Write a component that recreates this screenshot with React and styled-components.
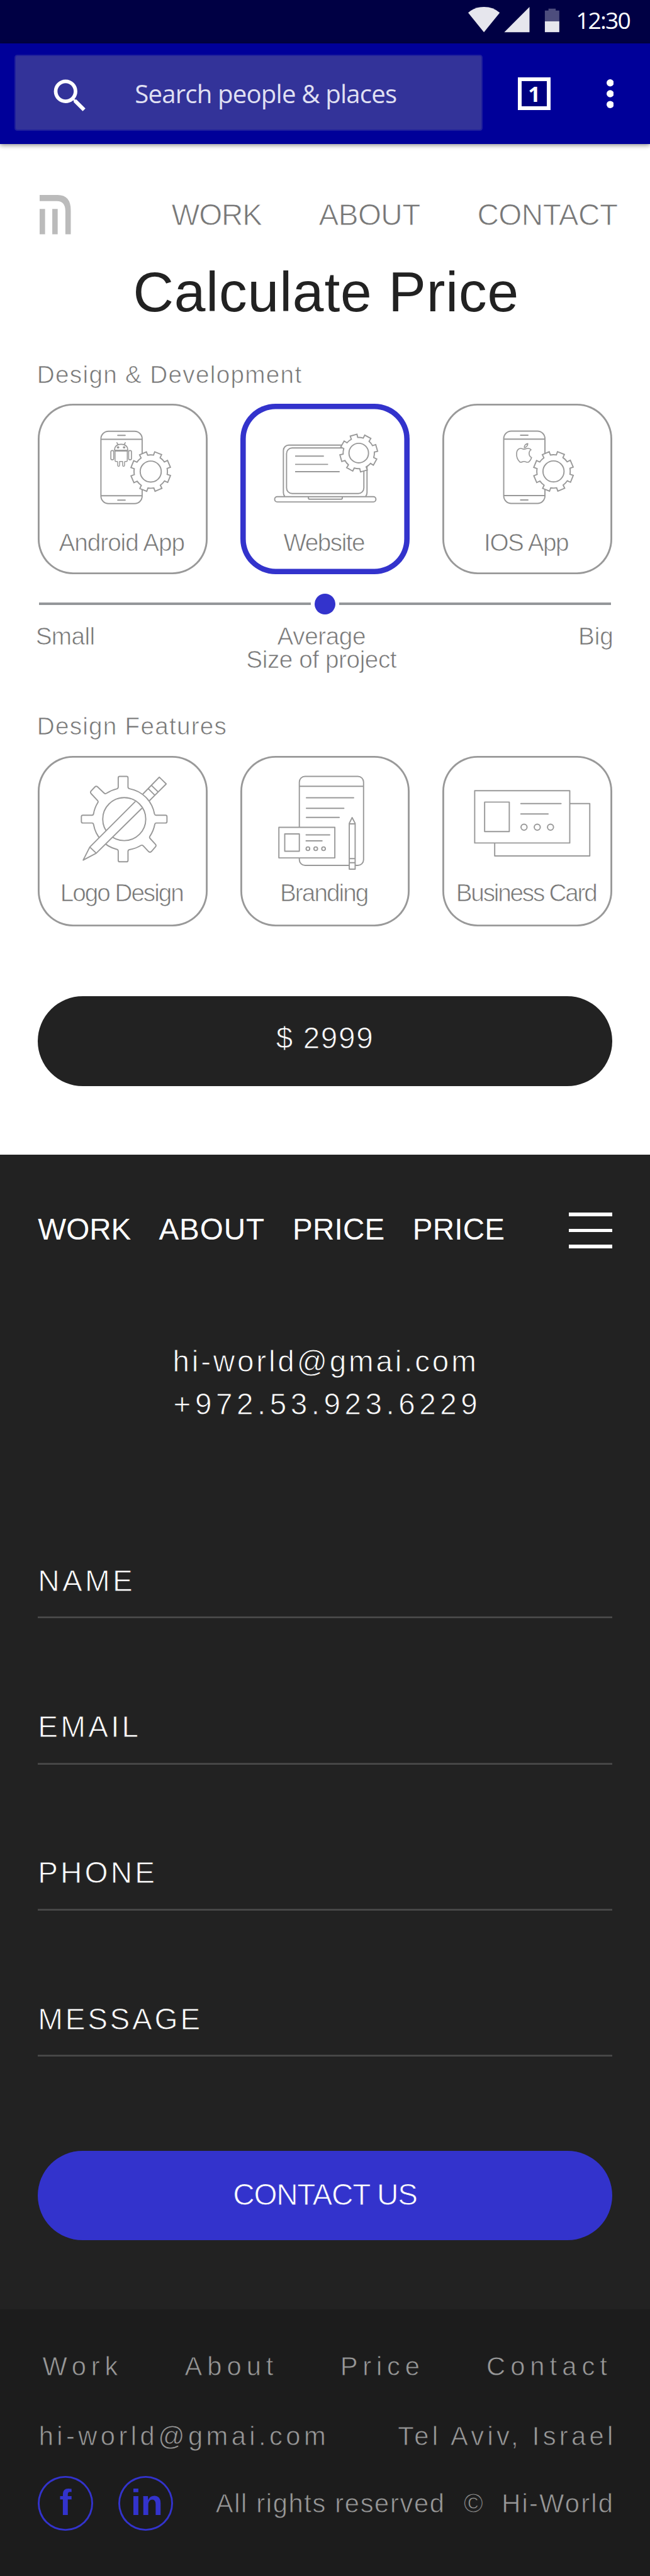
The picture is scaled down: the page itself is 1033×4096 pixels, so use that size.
import React from "react";
import styled, { createGlobalStyle, css } from "styled-components";

const u = (n) => `${+(n * 0.7172).toFixed(3)}px`;

const sans = `"Liberation Sans", Arial, Helvetica, sans-serif`;
const system = `"Open Sans", "Noto Sans", sans-serif`;

const color = {
  ink: "#222222",
  footer: "#1c1c1c",
  grey: "#777777",
  line: "#999999",
  accent: "#3333cc",
  bar: "#000099",
  status: "#000044",
};

const GlobalStyle = createGlobalStyle`
  *, *::before, *::after { box-sizing: border-box; }
  body { margin: 0; background: #fff; font-family: ${sans}; }
`;

/* The glyphs are set slightly larger than the line box to reach full cap height. */
const type = css`
  font-size: ${(p) => u(p.$size * 1.038)};
  letter-spacing: ${(p) => u(p.$track || 0)};
  line-height: ${(p) => u(p.$size)};
  white-space: pre;
`;

const systemType = css`
  font-family: ${system};
  font-size: ${(p) => u(p.$size)};
  letter-spacing: ${(p) => u(p.$track || 0)};
  line-height: 1;
  white-space: pre;
`;

/* Light cut: the outline takes the background colour and slims the stems. */
const light = (bg) => css`
  -webkit-text-stroke: 0.019em ${bg};
`;

const Page = styled.div`
  width: 100%;
  height: 4096px;
  overflow: hidden;
  display: flex;
  flex-direction: column;
`;

/* ---------- status + app bar ---------- */
const StatusBar = styled.div`
  flex: none;
  height: ${u(96)};
  background: ${color.status};
  display: flex;
  align-items: flex-start;
  padding: ${u(16)} 0 0 ${u(1038)};
`;
const StatusIcons = styled.svg`
  flex: none;
  width: ${u(202)};
  height: ${u(56)};
`;
const Clock = styled.span`
  ${systemType}
  color: #fff;
  margin: ${u(2)} 0 0 ${u(36)};
`;
const AppBar = styled.div`
  flex: none;
  height: ${u(224)};
  background: ${color.bar};
  display: flex;
  align-items: flex-start;
  padding: ${u(25)} 0 0 ${u(32)};
  box-shadow: 0 ${u(3)} ${u(10)} rgba(0, 0, 0, 0.45);
  z-index: 1;
`;
const SearchBox = styled.div`
  width: ${u(1037)};
  height: ${u(169)};
  border: ${u(3)} solid #1f1f9b;
  border-radius: ${u(6)};
  background: #333399;
  display: flex;
  align-items: center;
  padding-left: ${u(73)};
`;
const SearchIcon = styled.svg`
  width: ${u(96)};
  height: ${u(96)};
  margin-top: ${u(13)};
  fill: #fff;
`;
const SearchText = styled.span`
  ${systemType}
  color: #e0e0f2;
  margin: ${u(4)} 0 0 ${u(95)};
`;
const TabCount = styled.div`
  width: ${u(72)};
  height: ${u(72)};
  margin: ${u(51)} 0 0 ${u(79)};
  border: ${u(8.5)} solid #fff;
  background: #000080;
  color: #fff;
  font: bold ${u(48)} / 1 ${system};
  display: flex;
  align-items: center;
  justify-content: center;
`;
const MoreIcon = styled.svg`
  width: ${u(16)};
  height: ${u(64)};
  margin: ${u(55)} 0 0 ${u(124)};
  fill: #fff;
`;

/* ---------- calculator ---------- */
const Main = styled.main`
  flex: none;
  height: ${u(2240)};
  background: #fff;
  color: ${color.grey};
  padding: ${u(112)} ${u(84)} 0;
`;
const Header = styled.header`
  display: flex;
  height: ${u(88)};
  padding-left: ${u(4)};
`;
const Logo = styled.svg`
  width: ${u(69)};
  height: ${u(88)};
  flex: none;
`;
const TopNav = styled.nav`
  display: flex;
  gap: ${u(126.5)};
  margin: ${u(13)} 0 0 ${u(223)};
`;
const NavLink = styled.span`
  ${type}
  ${light("#fff")}
`;
const Title = styled.h1`
  ${type}
  margin: ${u(66.4)} 0 0;
  padding-left: ${u(5)};
  font-weight: 400;
  text-align: center;
  color: ${color.ink};
`;
const SectionLabel = styled.h2`
  ${type}
  ${light("#fff")}
  font-weight: 400;
  margin: ${(p) => u(p.$top)} 0 ${u(39.2)} ${u(-2)};
`;
const Cards = styled.div`
  display: grid;
  grid-template-columns: repeat(3, ${u(376)});
  justify-content: space-between;
`;
const Card = styled.div`
  height: ${u(378)};
  border-radius: ${u(78)};
  box-shadow: inset 0 0 0
    ${(p) => (p.$selected ? `${u(12)} ${color.accent}` : `${u(4)} ${color.line}`)};
  display: flex;
  flex-direction: column;
  align-items: center;
`;
const CardArt = styled.svg`
  width: ${u(376)};
  height: ${u(270)};
  flex: none;
  fill: none;
  stroke: ${color.line};
  stroke-width: 8;
  stroke-linejoin: round;
`;
const CardLabel = styled.span`
  ${type}
  ${light("#fff")}
  margin: ${(p) => u(p.$top)} ${u(5)} 0 0;
`;
const Slider = styled.div`
  display: flex;
  align-items: center;
  gap: ${u(8)};
  height: ${u(46)};
  margin: ${u(42.5)} ${u(2)} 0;
`;
const Track = styled.div`
  flex: 1;
  height: ${u(4.6)};
  background: #94979a;
`;
const Knob = styled.div`
  width: ${u(46)};
  height: ${u(46)};
  border-radius: 50%;
  background: ${color.accent};
`;
const Scale = styled.div`
  display: grid;
  grid-template-columns: 1fr auto 1fr;
  margin: ${u(23)} ${u(-3)} 0 ${u(-5)};
`;
const ScaleLabel = styled.span`
  ${type}
  ${light("#fff")}
  text-align: ${(p) => p.$align};
  margin-right: ${(p) => u(p.$nudge || 0)};
`;
const Pill = styled.div`
  ${type}
  ${(p) => light(p.$bg)}
  height: ${u(199)};
  margin-top: ${(p) => u(p.$top)};
  padding-bottom: ${(p) => u(p.$lift)};
  border-radius: ${u(100)};
  background: ${(p) => p.$bg};
  color: #fff;
  display: flex;
  align-items: center;
  justify-content: center;
`;

/* ---------- contact ---------- */
const Contact = styled.section`
  flex: none;
  height: ${u(2560)};
  background: ${color.ink};
  color: #fff;
  padding: ${u(128)} ${u(84)} 0;
`;
const MenuRow = styled.div`
  display: flex;
  justify-content: space-between;
  height: ${u(80)};
`;
const MenuLinks = styled.nav`
  display: flex;
  gap: ${u(61.5)};
  padding-top: ${u(5.8)};
`;
const MenuLink = styled.span`
  ${type}
`;
const Burger = styled.div`
  width: ${u(96)};
  display: flex;
  flex-direction: column;
  justify-content: space-between;
`;
const BurgerBar = styled.div`
  height: ${u(8)};
  background: #fff;
`;
const Reach = styled.address`
  font-style: normal;
  display: flex;
  flex-direction: column;
  align-items: center;
  gap: ${u(31.4)};
  margin-top: ${u(218.4)};
`;
const ReachLine = styled.span`
  ${type}
  ${light(color.ink)}
  padding-left: ${(p) => u(p.$indent)};
`;
const Form = styled.form`
  display: flex;
  flex-direction: column;
  gap: ${u(208.8)};
  margin-top: ${u(327)};
`;
const Field = styled.label`
  ${type}
  ${light(color.ink)}
  height: ${u(115.2)};
  box-shadow: inset 0 ${u(-4)} 0 #4a4a4a;
`;

/* ---------- footer ---------- */
const Footer = styled.footer`
  flex: none;
  height: ${u(592)};
  background: ${color.footer};
  color: ${color.line};
  padding: ${u(99.6)} ${u(74.5)} 0 ${u(84)};
`;
const FooterText = styled.span`
  ${type}
  ${light(color.footer)}
`;
const FooterLinks = styled.nav`
  display: flex;
  gap: ${u(137)};
  padding-left: ${u(10)};
`;
const FooterRow = styled.div`
  display: flex;
  justify-content: space-between;
  margin-top: ${u(97.5)};
  padding-left: ${u(2)};
`;
const LegalRow = styled.div`
  display: flex;
  align-items: center;
  height: ${u(122)};
  margin-top: ${u(60)};
`;
const Social = styled.a`
  flex: none;
  width: ${u(122)};
  height: ${u(122)};
  margin-right: ${u(56)};
  padding: 0 0 ${u(3)} ${(p) => u(p.$shift || 0)};
  box-shadow: inset 0 0 0 ${u(4)} ${color.accent};
  border-radius: 50%;
  color: ${color.accent};
  font: bold ${u(80)} / 1 ${sans};
  display: flex;
  align-items: center;
  justify-content: center;
`;
const Legal = styled.div`
  display: flex;
  gap: ${u(41)};
  margin: ${u(3)} 0 0 ${u(38)};
`;

/* ---------- illustrations ---------- */
const gearPath = (cx, cy, tip, base, rotation) => {
  const at = (r, deg) => {
    const a = (deg * Math.PI) / 180;
    return `${(cx + r * Math.cos(a)).toFixed(1)} ${(cy + r * Math.sin(a)).toFixed(1)}`;
  };
  let d = "";
  for (let i = 0; i < 8; i++) {
    const a = rotation + i * 45;
    d += i ? `A${base} ${base} 0 0 1 ${at(base, a - 12.3)}` : `M${at(base, a - 12.3)}`;
    d += `L${at(tip, a - 10.6)}L${at(tip, a + 10.6)}L${at(base, a + 12.3)}`;
  }
  return `${d}A${base} ${base} 0 0 1 ${at(base, rotation - 12.3)}Z`;
};

const Gear = ({ cx, cy, tip, base, hole, rotation }) => (
  <g fill="#fff" strokeLinejoin="miter">
    <path d={gearPath(cx, cy, tip, base, rotation)} />
    <circle cx={cx} cy={cy} r={hole} />
  </g>
);

const Phone = () => (
  <>
    <rect x="493" y="227" width="274" height="481" rx="50" />
    <path d="M493 280H767M493 656H767" />
    <path d="M605 254H654M605 685H654" strokeLinecap="round" />
    <Gear cx={824} cy={495} tip={134} base={111} hole={70} rotation={22} />
  </>
);

const AndroidArt = () => (
  <CardArt viewBox="73 44 1128 810">
    <Phone />
    <g strokeWidth="7" strokeLinecap="round">
      <path d="M584 352V348C586 324 604 313 627 313S669 324 671 348V352" />
      <path d="M599 303L606 315M655 303L648 315" />
      <path d="M582 356H673" strokeWidth="12" strokeLinecap="butt" />
      <circle cx="607" cy="334" r="8" fill="#999" stroke="none" />
      <circle cx="647" cy="334" r="8" fill="#999" stroke="none" />
      <rect x="559" y="355" width="19" height="62" rx="9" />
      <rect x="677" y="355" width="19" height="62" rx="9" />
      <path
        strokeWidth="6"
        d="M587 361V420Q587 428 595 428H601Q604 428 604 432V453Q604 460 610.500 460T617 453V428H637V453Q637 460 643.500 460T650 453V432Q650 428 654 428H660Q668 428 668 420V361"
      />
    </g>
  </CardArt>
);

const IosArt = () => (
  <CardArt viewBox="61 44 1128 810">
    <g transform="translate(-24 -1)">
      <Phone />
    </g>
    <g strokeWidth="7">
      <path d="M606 335C604 322 615 311 629 309C629 322 620 334 606 335Z" />
      <path d="M603 346C612 346 620 340 632 341C641 342 647 345 651 350C632 362 634 392 654 402C650 415 642 427 634 432C622 437 615 427 604 428C594 427 588 436 577 432C561 418 553 395 555 372C556 353 568 340 583 341C592 342 597 346 603 346Z" />
    </g>
  </CardArt>
);

const WebsiteArt = () => (
  <CardArt viewBox="66 44 1128 810">
    <path d="M361 660Q352 650 352 635V355A36 36 0 0 1 388 319H872A36 36 0 0 1 908 355V635Q908 650 899 660" />
    <rect x="373" y="338" width="514" height="303" rx="37" />
    <path d="M430 392H621M430 447H649M430 496H726" />
    <rect x="294" y="662" width="673" height="35" rx="17" />
    <path d="M518 662V669Q518 679 528 679H734Q744 679 744 669V662" />
    <Gear cx={853} cy={372} tip={126} base={104} hole={65} rotation={-16} />
  </CardArt>
);

const LogoArt = () => (
  <CardArt viewBox="73 44 1128 810">
    <path d="M608 250V190Q608 180 618 180H663Q673 180 673 190V250Q673 260 683 262A206 206 0 0 1 849 430Q852 438 859 438H922Q932 438 932 448V480Q932 490 922 490H861Q853 490 851 499A206 206 0 0 1 818 579Q814 587 820 593L856 632Q862 640 856 648L828 680Q819 688 810 680L774 642Q767 635 759 639A206 206 0 0 1 683 667Q673 669 673 679V738Q673 748 663 748H618Q608 748 608 738V678Q608 668 598 665A206 206 0 0 1 444 500Q442 490 434 490H373Q363 490 363 480V448Q363 438 373 438H434Q442 438 444 429A206 206 0 0 1 472 355Q477 348 471 341L427 294Q421 286 427 278L453 250Q462 242 471 250L514 291Q521 298 529 293A206 206 0 0 1 598 263Q608 260 608 250Z" />
    <circle cx="648" cy="464" r="143" />
    <path d="M419 650L720 349L764 393L462 691Z" fill="#fff" stroke="none" />
    <path d="M722 347L419 650L375 737L462 691L766 391M419 650L462 691" />
    <path d="M772 297L881 185L927 230L815 342M808 262L850 304M829 240L873 283" />
  </CardArt>
);

const BrandingArt = () => (
  <CardArt viewBox="66 44 1128 810">
    <rect x="458" y="180" width="427" height="592" rx="38" />
    <path d="M458 246H885" />
    <path d="M505 322H819M505 392H754M505 453H723" strokeLinecap="round" />
    <rect x="322" y="519" width="372" height="203" fill="#fff" />
    <rect x="361" y="563" width="97" height="115" />
    <path d="M503 569H660M503 609H609" strokeLinecap="round" />
    <circle cx="515" cy="661" r="12" />
    <circle cx="567" cy="661" r="12" />
    <circle cx="619" cy="661" r="12" />
    <path d="M790 492L809 454L829 492V797H790Z" fill="#fff" />
    <path d="M790 496H829M790 727H829M790 754H829" />
  </CardArt>
);

const BusinessArt = () => (
  <CardArt viewBox="61 44 1128 810">
    <rect x="409" y="361" width="632" height="348" />
    <rect x="276" y="275" width="632" height="348" fill="#fff" />
    <rect x="342" y="351" width="164" height="196" />
    <path d="M583 361H850M583 430H764" strokeLinecap="round" />
    <circle cx="604" cy="518" r="20" />
    <circle cx="692" cy="518" r="20" />
    <circle cx="780" cy="518" r="20" />
  </CardArt>
);

const projectTypes = [
  { name: "Android App", track: -1.45, Art: AndroidArt },
  { name: "Website", track: -2.1, Art: WebsiteArt, selected: true },
  { name: "IOS App", track: -2, Art: IosArt },
];
const features = [
  { name: "Logo Design", track: -2.85, Art: LogoArt },
  { name: "Branding", track: -2.7, Art: BrandingArt },
  { name: "Business Card", track: -3.1, Art: BusinessArt },
];

const CardRow = ({ items, labelTop }) => (
  <Cards>
    {items.map(({ name, track, Art, selected }) => (
      <Card key={name} $selected={selected}>
        <Art />
        <CardLabel $size={52} $track={track} $top={labelTop}>
          {name}
        </CardLabel>
      </Card>
    ))}
  </Cards>
);

export default function App() {
  return (
    <Page>
      <GlobalStyle />
      <StatusBar>
        <StatusIcons viewBox="0 0 202 56" fill="#e6e6ed">
          <path d="M0 13Q14 0 35 0T70 13L35 56Z" />
          <path d="M136 0V56H80Z" />
          <path d="M178 4H194V8H202V32H170V8H178Z" fill="#4d4d7d" />
          <path d="M170 32H202V56H170Z" />
        </StatusIcons>
        <Clock $size={52} $track={-2.6}>12:30</Clock>
      </StatusBar>
      <AppBar>
        <SearchBox>
          <SearchIcon viewBox="0 0 24 24">
            <path d="M15.500 14h-.79l-.28-.27A6.471 6.471 0 0 0 16 9.500 6.500 6.500 0 1 0 9.500 16c1.610 0 3.090-.59 4.230-1.570l.27.28v.79l5 4.990L20.490 19l-4.990-5zm-6 0C7.010 14 5 11.990 5 9.500S7.010 5 9.500 5 14 7.010 14 9.500 11.990 14 9.500 14z" />
          </SearchIcon>
          <SearchText $size={56} $track={-1.15}>Search people &amp; places</SearchText>
        </SearchBox>
        <TabCount>1</TabCount>
        <MoreIcon viewBox="0 0 16 64">
          <circle cx="8" cy="8" r="8" />
          <circle cx="8" cy="32" r="8" />
          <circle cx="8" cy="56" r="8" />
        </MoreIcon>
      </AppBar>

      <Main>
        <Header>
          <Logo viewBox="0 0 69 88" fill="#bbb">
            <path d="M0 0H40Q69 0 69 34V87H57V36Q57 13.500 38 13.500H0Z" />
            <path d="M0 31H12V87H0ZM28 31H40V87H28Z" />
          </Logo>
          <TopNav>
            <NavLink $size={64} $track={-1.7}>WORK</NavLink>
            <NavLink $size={64} $track={-0.8}>ABOUT</NavLink>
            <NavLink $size={64} $track={-0.7}>CONTACT</NavLink>
          </TopNav>
        </Header>
        <Title $size={120} $track={1.2}>Calculate Price</Title>

        <SectionLabel $size={52} $track={1.8} $top={97.6}>Design &amp; Development</SectionLabel>
        <CardRow items={projectTypes} labelTop={12} />
        <Slider>
          <Track />
          <Knob />
          <Track />
        </Slider>
        <Scale>
          <ScaleLabel $size={52} $track={-0.85} $align="left">Small</ScaleLabel>
          <ScaleLabel $size={52} $track={-0.6} $align="center" $nudge={14}>
            {"Average\nSize of project"}
          </ScaleLabel>
          <ScaleLabel $size={52} $align="right">Big</ScaleLabel>
        </Scale>

        <SectionLabel $size={52} $track={1.7} $top={95.7}>Design Features</SectionLabel>
        <CardRow items={features} labelTop={7.7} />
        <Pill $size={64} $track={2.3} $bg={color.ink} $top={155} $lift={11}>$ 2999</Pill>
      </Main>

      <Contact>
        <MenuRow>
          <MenuLinks>
            <MenuLink $size={64}>WORK</MenuLink>
            <MenuLink $size={64} $track={1.2}>ABOUT</MenuLink>
            <MenuLink $size={64} $track={0.3}>PRICE</MenuLink>
            <MenuLink $size={64} $track={0.3}>PRICE</MenuLink>
          </MenuLinks>
          <Burger>
            <BurgerBar />
            <BurgerBar />
            <BurgerBar />
          </Burger>
        </MenuRow>
        <Reach>
          <ReachLine $size={64} $track={5.3} $indent={3}>hi-world@gmai.com</ReachLine>
          <ReachLine $size={64} $track={9.1} $indent={11}>+972.53.923.6229</ReachLine>
        </Reach>
        <Form>
          <Field $size={64} $track={6}>NAME</Field>
          <Field $size={64} $track={5.9}>EMAIL</Field>
          <Field $size={64} $track={5.7}>PHONE</Field>
          <Field $size={64} $track={5.2}>MESSAGE</Field>
        </Form>
        <Pill $size={64} $track={-1.8} $bg={color.accent} $top={208} $lift={3}>CONTACT US</Pill>
      </Contact>

      <Footer>
        <FooterLinks>
          <FooterText $size={56} $track={10.9}>Work</FooterText>
          <FooterText $size={56} $track={11.2}>About</FooterText>
          <FooterText $size={56} $track={10.9}>Price</FooterText>
          <FooterText $size={56} $track={11.2}>Contact</FooterText>
        </FooterLinks>
        <FooterRow>
          <FooterText $size={56} $track={7.6}>hi-world@gmai.com</FooterText>
          <FooterText $size={56} $track={7.4}>Tel Aviv, Israel</FooterText>
        </FooterRow>
        <LegalRow>
          <Social>f</Social>
          <Social $shift={5}>in</Social>
          <Legal>
            <FooterText $size={56} $track={2.3}>All rights reserved</FooterText>
            <FooterText $size={56}>©</FooterText>
            <FooterText $size={56} $track={3.1}>Hi-World</FooterText>
          </Legal>
        </LegalRow>
      </Footer>
    </Page>
  );
}
